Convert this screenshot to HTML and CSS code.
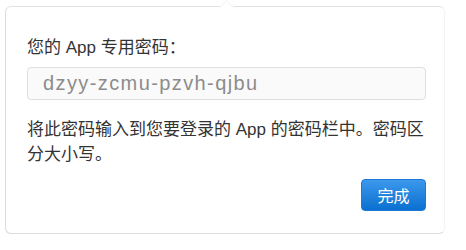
FILE: index.html
```html
<!DOCTYPE html>
<html lang="zh-CN">
<head>
<meta charset="utf-8">
<link rel="stylesheet" href="styles.css">
</head>
<body>
<div class="popover">
  <div class="arrow"></div>
  <div class="label">您的 App 专用密码：</div>
  <div class="field">dzyy-zcmu-pzvh-qjbu</div>
  <p class="note">将此密码输入到您要登录的 App 的密码栏中。密码区分大小写。</p>
  <div class="actions">
    <button class="done">完成</button>
  </div>
</div>
</body>
</html>
```
FILE: styles.css
```css
html, body {
  margin: 0;
  padding: 0;
  background: #ffffff;
}
body {
  font-family: "Liberation Sans", "Noto Sans CJK SC", sans-serif;
  color: #333333;
}
.popover {
  position: relative;
  margin: 6px 0 0 5px;
  width: 440px;
  height: 228px;
  box-sizing: border-box;
  border: 1px solid #dcdcdc;
  border-right-color: #f2f2f2;
  border-top-color: #e2e2e2;
  border-radius: 6px;
  padding: 29px 18px 0 21px;
  background: #ffffff;
}
.arrow {
  position: absolute;
  top: -5px;
  left: 215px;
  width: 10px;
  height: 10px;
  background: #ffffff;
  transform: rotate(45deg);
  border-top: 1px solid #f6f6f6;
  border-left: 1px solid #f6f6f6;
}
.label {
  font-size: 17px;
  line-height: 24px;
}
.field {
  margin-top: 7px;
  height: 33px;
  box-sizing: border-box;
  border: 1px solid #dedede;
  border-radius: 4px;
  background: #fafafa;
  padding-left: 15px;
  font-size: 20px;
  line-height: 31px;
  letter-spacing: 1.4px;
  color: #8c8c8c;
}
.note {
  margin: 17px 0 0 0;
  font-size: 17px;
  line-height: 25px;
}
.actions {
  display: flex;
  justify-content: flex-end;
  margin-top: 12px;
}
.done {
  width: 65px;
  height: 32px;
  border: 1px solid #1a78d6;
  border-radius: 4px;
  background: linear-gradient(#3c98ec, #0a70d0);
  color: #ffffff;
  font-family: "Liberation Sans", "Noto Sans CJK SC", sans-serif;
  font-size: 16px;
  padding: 0;
}
```
